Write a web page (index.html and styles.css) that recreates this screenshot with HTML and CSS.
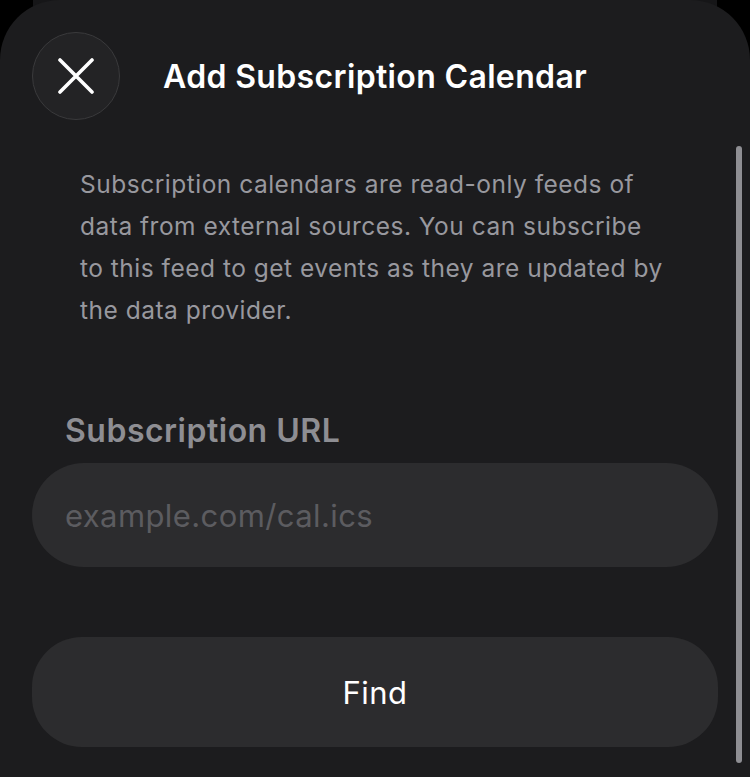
FILE: index.html
```html
<!DOCTYPE html>
<html>
<head>
<meta charset="utf-8">
<link rel="stylesheet" href="styles.css">
</head>
<body>
<div class="screen">
  <div class="back-sheet"></div>
  <div class="sheet">
    <header class="header">
      <button class="close" aria-label="Close">
        <svg width="36" height="36" viewBox="0 0 36 36"><path d="M2 2 L34 34 M34 2 L2 34" stroke="#fff" stroke-width="3.6" stroke-linecap="round" fill="none"/></svg>
      </button>
      <h1 class="title">Add Subscription Calendar</h1>
    </header>
    <p class="desc">Subscription calendars are read-only feeds of data from external sources. You can subscribe to this feed to get events as they are updated by the data provider.</p>
    <label class="label">Subscription URL</label>
    <div class="input"><span class="placeholder">example.com/cal.ics</span></div>
    <button class="find">Find</button>
    <div class="scrollbar"></div>
  </div>
</div>
</body>
</html>
```

FILE: styles.css
```css
html, body {
  margin: 0;
  padding: 0;
  background: #000;
}
.screen {
  position: relative;
  width: 750px;
  height: 777px;
  overflow: hidden;
  font-family: Inter, "Noto Sans", sans-serif;
}
.back-sheet {
  position: absolute;
  left: 33px;
  right: 33px;
  top: -40px;
  height: 200px;
  background: #161618;
  border-radius: 40px;
}
.sheet {
  position: relative;
  height: 777px;
  background: #1c1c1e;
  border-radius: 60px 60px 0 0;
  display: flex;
  flex-direction: column;
  box-sizing: border-box;
  padding-top: 32px;
}
.header {
  display: flex;
  align-items: center;
  padding-left: 32px;
  gap: 43px;
}
.close {
  width: 88px;
  height: 88px;
  border-radius: 50%;
  border: 1.5px solid #3a3a3c;
  background: #232325;
  display: flex;
  align-items: center;
  justify-content: center;
  padding: 0;
  box-sizing: border-box;
}
.title {
  margin: 0;
  color: #fff;
  font-size: 32px;
  font-weight: 600;
  letter-spacing: 0.35px;
}
.desc {
  margin: 43px 0 0;
  padding: 0 78px 0 80px;
  color: #98989e;
  font-size: 24.5px;
  line-height: 42px;
  letter-spacing: 0.5px;
}
.label {
  margin-top: 80px;
  padding-left: 65px;
  color: #8e8e93;
  font-size: 32px;
  line-height: 40px;
  font-weight: 600;
  letter-spacing: 0.5px;
}
.input {
  margin: 12px 32px 0;
  height: 104px;
  border-radius: 52px;
  background: #2c2c2e;
  display: flex;
  align-items: center;
  padding-left: 33px;
}
.placeholder {
  color: #5c5c60;
  font-size: 31px;
  letter-spacing: 0.4px;
}
.find {
  margin: 70px 32px 0;
  height: 110px;
  border: none;
  border-radius: 50px;
  background: #2c2c2e;
  color: #fff;
  font-family: inherit;
  font-size: 31px;
  letter-spacing: 0.5px;
}
.scrollbar {
  position: absolute;
  right: 8px;
  top: 146px;
  width: 6px;
  height: 617px;
  border-radius: 3px;
  background: #8e8e93;
}
```
